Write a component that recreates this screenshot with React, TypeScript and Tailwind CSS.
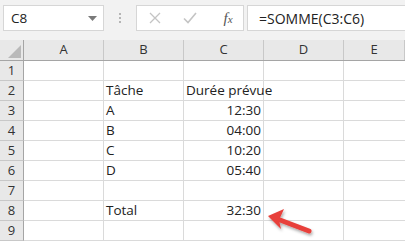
import React from 'react';

const cols = ['A', 'B', 'C', 'D', 'E'];
const widths = ['w-[80px]', 'w-[80px]', 'w-[80px]', 'w-[80px]', 'flex-1'];

const rows: { b?: string; c?: string; cAlign?: 'left' | 'right' }[] = [
  {},
  { b: 'Tâche', c: 'Durée prévue', cAlign: 'left' },
  { b: 'A', c: '12:30', cAlign: 'right' },
  { b: 'B', c: '04:00', cAlign: 'right' },
  { b: 'C', c: '10:20', cAlign: 'right' },
  { b: 'D', c: '05:40', cAlign: 'right' },
  {},
  { b: 'Total', c: '32:30', cAlign: 'right' },
  {},
];

const App = () => {
  return (
    <div className="relative w-[405px] h-[241px] overflow-hidden bg-white font-['Open_Sans',sans-serif] text-[#222]">
      {/* formula bar */}
      <div className="h-[40px] bg-[#f2f2f2] flex items-start pt-[5px] pl-[3px]">
        <div className="w-[101px] h-[26px] bg-white border border-[#d6d6d6] flex items-center justify-between pl-[7px] pr-[6px] text-[13.5px]">
          <span>C8</span>
          <svg width="9" height="5" viewBox="0 0 9 5"><path d="M0 0h9L4.5 5z" fill="#7a7a7a" /></svg>
        </div>
        <div className="w-[32px] h-[26px] flex flex-col items-center justify-center gap-[2px]">
          <span className="w-[2px] h-[2px] bg-[#b5b5b5]" />
          <span className="w-[2px] h-[2px] bg-[#b5b5b5]" />
          <span className="w-[2px] h-[2px] bg-[#b5b5b5]" />
        </div>
        <div className="w-[108px] h-[26px] bg-white border border-[#d6d6d6] flex items-center">
          <div className="w-[36px] flex justify-center">
            <svg width="12" height="12" viewBox="0 0 12 12"><path d="M1 1l10 10M11 1L1 11" stroke="#c4c4c4" strokeWidth="1.3" /></svg>
          </div>
          <div className="w-[34px] flex justify-center">
            <svg width="14" height="12" viewBox="0 0 14 12"><path d="M1 6.5l4 4L13 1" stroke="#c4c4c4" strokeWidth="1.6" fill="none" /></svg>
          </div>
          <div className="flex-1 flex justify-center items-baseline pl-[6px] font-['Liberation_Serif',serif] italic text-[15px] text-[#555]">
            f<span className="text-[11px]">x</span>
          </div>
        </div>
        <div className="flex-1 ml-[3px] h-[26px] bg-white border border-[#d6d6d6] border-r-0 flex items-center pl-[11px] text-[14px]">
          =SOMME(C3:C6)
        </div>
      </div>

      {/* column headers */}
      <div className="flex h-[21px] bg-[#e8e8e8] border-b border-[#a5a5a5] text-[13px] text-[#333]">
        <div className="w-[24px] border-r border-[#a5a5a5] relative">
          <svg className="absolute right-[2px] bottom-[2px]" width="13" height="13" viewBox="0 0 13 13"><path d="M13 0v13H0z" fill="#b9b9b9" /></svg>
        </div>
        {cols.map((c, i) => (
          <div key={c} className={`${widths[i]} border-r border-[#c8c8c8] flex items-center justify-center`}>
            {c}
          </div>
        ))}
      </div>

      {/* rows */}
      {rows.map((r, idx) => (
        <div key={idx} className="flex h-[20px] text-[13.5px]">
          <div className="w-[24px] bg-[#e8e8e8] border-r border-[#a5a5a5] border-b border-b-[#c8c8c8] flex items-center justify-center text-[13px] text-[#333]">
            {idx + 1}
          </div>
          <div className="w-[80px] border-r border-b border-[#dadada]" />
          <div className="w-[80px] border-r border-b border-[#dadada] flex items-center pl-[2px] whitespace-nowrap">
            {r.b}
          </div>
          <div className={`w-[80px] border-r border-b border-[#dadada] flex items-center whitespace-nowrap ${r.cAlign === 'right' ? 'justify-end pr-[2px]' : 'pl-[2px] overflow-visible'}`}>
            {r.c}
          </div>
          <div className="w-[80px] border-r border-b border-[#dadada]" />
          <div className="flex-1 border-b border-[#dadada]" />
        </div>
      ))}

      {/* red arrow */}
      <svg className="absolute left-[262px] top-[194px]" width="60" height="46" viewBox="0 0 60 46">
        <defs>
          <filter id="sh" x="-20%" y="-20%" width="150%" height="160%">
            <feDropShadow dx="1" dy="2" stdDeviation="1.5" floodColor="#000" floodOpacity="0.35" />
          </filter>
        </defs>
        <g filter="url(#sh)">
          <path d="M47 37L18 26" stroke="#e8403b" strokeWidth="5" strokeLinecap="round" />
          <path d="M6 22L22 15L17 26L19 35z" fill="#e8403b" />
        </g>
      </svg>
    </div>
  );
};

export default App;
